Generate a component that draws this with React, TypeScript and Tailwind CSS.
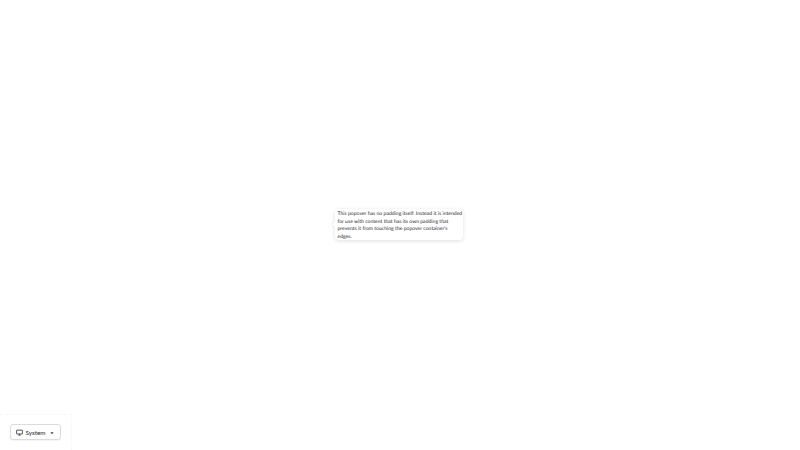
import React from "react";

export default function App() {
  return (
    <div className="relative flex h-[450px] w-[800px] flex-col justify-end overflow-hidden bg-white font-['Lato',sans-serif] text-[#27272a] [text-rendering:geometricPrecision]">
      <div className="absolute left-[335px] top-[209px] h-[31px] w-[128px] rounded-[4px] bg-white pl-[2.5px] pt-[2px] text-[5.08px] leading-[7.6px] text-[#27272a] shadow-[0_1px_4px_rgba(0,0,0,0.13)]">
        <div className="absolute left-[-2.5px] top-[12.5px] h-[5px] w-[5px] rotate-45 bg-white shadow-[-1px_1px_1px_rgba(0,0,0,0.05)]" />
        <p className="relative">
          This popover has no padding itself. Instead it is intended for use with content that has its own padding that prevents it from touching the popover container's edges.
        </p>
      </div>
      <div className="flex h-[36px] w-[72px] items-start border-r border-t border-dashed border-[#f7f7f8] pl-[10px] pt-[9px]">
        <button className="flex h-[16px] w-[51px] items-center rounded-[3px] border border-[#dcdce0] bg-white pl-[5px] pt-[1px] text-[6.3px] shadow-[0_1px_1px_rgba(0,0,0,0.05)]">
          <svg viewBox="0 0 24 24" className="h-[7px] w-[7px]" fill="none" stroke="#3f3f46" strokeWidth="3">
            <rect x="2" y="4" width="20" height="13" rx="1" />
            <path d="M8 21h8M12 17v4" />
          </svg>
          <span className="ml-[2.5px]">System</span>
          <svg viewBox="0 0 10 10" className="ml-[5px] h-[4px] w-[4px]" fill="#3f3f46">
            <path d="M1 3h8L5 8z" />
          </svg>
        </button>
      </div>
    </div>
  );
}
